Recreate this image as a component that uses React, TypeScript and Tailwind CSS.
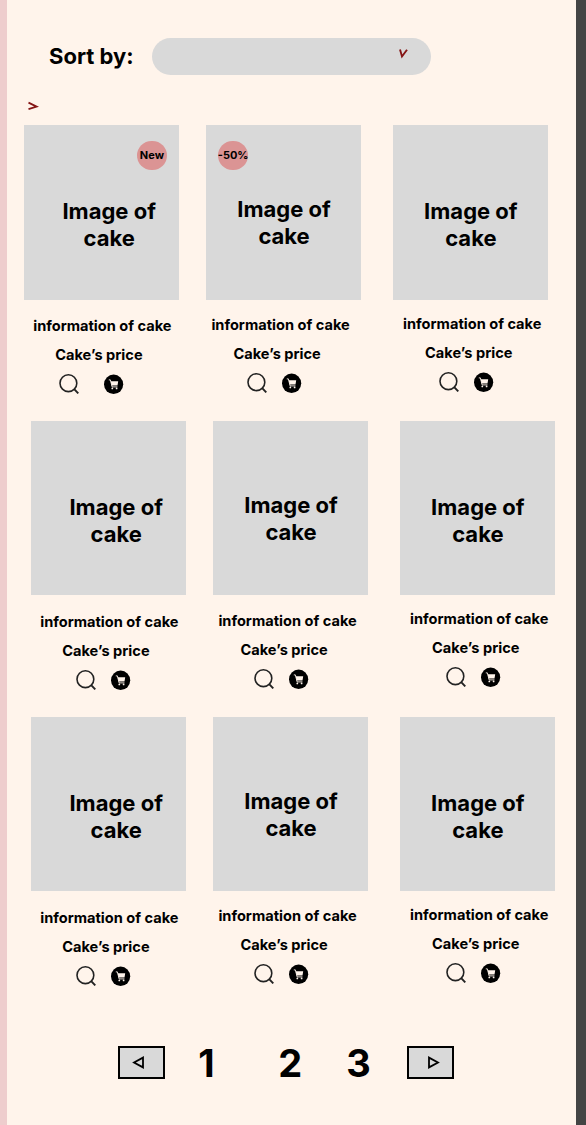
import React from "react";

type Column = {
  title: string;
  info: string;
  price: string;
  icons: string;
  caption: string;
};

const columns: Column[] = [
  { title: "pt-[73.2px] pl-[37px]", info: "pl-[9px]", price: "pl-[31px]", icons: "pl-[45px]", caption: "pt-[17.7px]" },
  { title: "pt-[71.2px] pl-[29.7px]", info: "pl-[5px]", price: "pl-[27px]", icons: "pl-[41px]", caption: "pt-[16.3px]" },
  { title: "pt-[73.2px] pl-[29.8px]", info: "pl-[10px]", price: "pl-[32px]", icons: "pl-[46px]", caption: "pt-[14.8px]" },
];

function SearchIcon() {
  return (
    <svg className="h-5 w-5 shrink-0" viewBox="0 0 20 20" fill="none" stroke="#222" strokeWidth="1.6">
      <circle cx="9.4" cy="9.2" r="8.4" />
      <path d="M14.9 14.9 19.3 19.4" strokeWidth="1.9" />
    </svg>
  );
}

function CartIcon() {
  return (
    <svg className="h-5 w-5 shrink-0" viewBox="0 0 20 20">
      <ellipse cx="9.6" cy="10.3" rx="9.6" ry="9.7" fill="#000" />
      <path d="M4.8 5.9h1.6l1.7 7h5.4" fill="none" stroke="#fff4eb" strokeWidth="0.9" />
      <path d="M6.6 7.3h7.6l-.7 4.2H7.7z" fill="#fff4eb" />
      <circle cx="8.3" cy="14.4" r="0.9" fill="#fff4eb" />
      <circle cx="12.6" cy="14.4" r="0.9" fill="#fff4eb" />
    </svg>
  );
}

function Badge({ text, place }: { text: string; place: string }) {
  return (
    <span className={`absolute top-[15.5px] flex h-[29px] w-[29.5px] items-center justify-center rounded-full bg-[#db9494] text-[11px] font-bold whitespace-nowrap ${place}`}>
      {text}
    </span>
  );
}

function CakeCard({ column, badge, wide }: { column: Column; badge?: React.ReactNode; wide?: boolean }) {
  return (
    <article className="w-[154.8px] shrink-0">
      <div className={`relative h-[174.6px] bg-[#d9d9d9] ${column.title}`}>
        {badge}
        <h2 className="w-24 text-center text-[22px] leading-[27px] font-bold">
          Image of
          <br />
          cake
        </h2>
      </div>
      <div className={`text-[14.6px] leading-[18px] font-bold whitespace-nowrap ${column.caption}`}>
        <p className={column.info}>information of cake</p>
        <p className={`pt-[11px] ${column.price}`}>Cake’s price</p>
        <div className={`flex pt-[10px] ${wide ? "gap-[25px] pl-[35px]" : `gap-[15px] ${column.icons}`}`}>
          <SearchIcon />
          <CartIcon />
        </div>
      </div>
    </article>
  );
}

function CakeRow({ first }: { first?: boolean }) {
  const badges = first
    ? [<Badge key="new" text="New" place="left-[113px]" />, <Badge key="sale" text="-50%" place="left-[12px]" />]
    : [];
  return (
    <div className={`flex h-[295.7px] shrink-0 ${first ? "pl-[17.2px]" : "pl-[24.2px]"}`}>
      <CakeCard column={columns[0]} badge={badges[0]} wide={first} />
      <div className="w-[27.4px] shrink-0" />
      <CakeCard column={columns[1]} badge={badges[1]} />
      <div className="w-[31.9px] shrink-0" />
      <CakeCard column={columns[2]} />
    </div>
  );
}

function PageArrow({ flip }: { flip?: boolean }) {
  return (
    <button className={`flex h-[33px] w-[47px] items-center border-2 border-black bg-[#d9d9d9] ${flip ? "pl-[18px]" : "pl-[12px]"}`}>
      <svg className={`h-[13px] w-[13px] ${flip ? "-scale-x-100" : ""}`} viewBox="0 0 13 13" fill="none" stroke="#000" strokeWidth="1.8">
        <path d="M2 6.5 11 1.6v9.8z" />
      </svg>
    </button>
  );
}

export default function App() {
  return (
    <main className="flex h-[1125px] w-[586px] flex-col overflow-hidden border-r-[10.4px] border-l-[7px] border-r-[#444] border-l-[#eecdcd] bg-[#fff4eb] font-['Inter',sans-serif] text-black">
      <div className="flex h-[75px] shrink-0 items-start pl-[42px]">
        <span className="w-[103px] pt-[43px] text-[22px] leading-[27px] font-bold whitespace-nowrap">Sort by:</span>
        <button className="mt-[38px] flex h-[36.5px] w-[279px] justify-end rounded-full bg-[#d9d9d9] pt-[11px] pr-[23px]">
          <svg className="h-[10px] w-[9px]" viewBox="0 0 9 10" fill="none" stroke="#851515" strokeWidth="1.9">
            <path d="M1 .5 3 7.5 8 .8" />
          </svg>
        </button>
      </div>
      <div className="h-[50.2px] shrink-0 pt-[26px] pl-[21px]">
        <svg className="h-[10px] w-[11px]" viewBox="0 0 11 10" fill="none" stroke="#851515" strokeWidth="1.8">
          <path d="M.5 1.6 8.7 5.6.5 8.2" />
        </svg>
      </div>
      <CakeRow first />
      <CakeRow />
      <CakeRow />
      <nav className="flex shrink-0 items-center pt-[33.7px] pl-[111.3px] text-[38px] leading-[33px] font-bold">
        <PageArrow />
        <span className="w-[113px] pt-px pl-[33px]">1</span>
        <span className="w-[68px] pt-px">2</span>
        <span className="w-[61px] pt-px">3</span>
        <PageArrow flip />
      </nav>
    </main>
  );
}
